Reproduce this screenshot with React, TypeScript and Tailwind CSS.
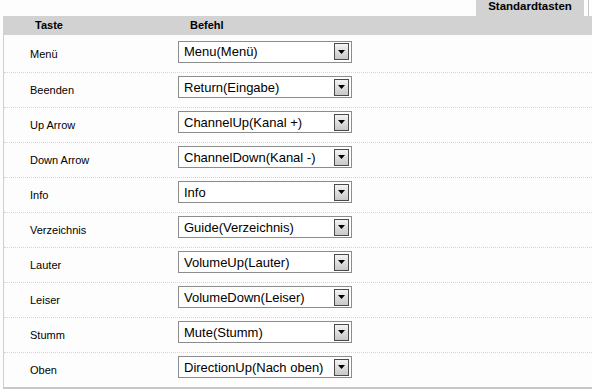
const rows = [
  { key: "Menü", cmd: "Menu(Menü)" },
  { key: "Beenden", cmd: "Return(Eingabe)" },
  { key: "Up Arrow", cmd: "ChannelUp(Kanal +)" },
  { key: "Down Arrow", cmd: "ChannelDown(Kanal -)" },
  { key: "Info", cmd: "Info" },
  { key: "Verzeichnis", cmd: "Guide(Verzeichnis)" },
  { key: "Lauter", cmd: "VolumeUp(Lauter)" },
  { key: "Leiser", cmd: "VolumeDown(Leiser)" },
  { key: "Stumm", cmd: "Mute(Stumm)" },
  { key: "Oben", cmd: "DirectionUp(Nach oben)" },
];

function FakeSelect({ value }: { value: string }) {
  return (
    <div className="w-[174px] h-[22px] mb-[6px] border border-[#8c8c8c] bg-white flex items-center justify-between pl-[5px] pr-[2px]">
      <span className="text-[13px] text-black whitespace-nowrap leading-none">{value}</span>
      <div className="w-[15px] h-[17px] border border-[#4a4a4a] bg-gradient-to-b from-[#f4f4f4] to-[#c8c8c8] flex items-center justify-center">
        <svg width="7" height="4" viewBox="0 0 7 4">
          <path d="M0 0h7L3.5 4z" fill="#000" />
        </svg>
      </div>
    </div>
  );
}

export default function App() {
  return (
    <div className="w-[592px] h-[389px] bg-[#fdfdfd] overflow-hidden font-['Liberation_Sans',Arial,sans-serif]">
      <div className="h-4 flex justify-end items-stretch">
        <div className="w-[108px] bg-[#d2d2d2] flex justify-center items-start">
          <span className="text-[11.5px] font-bold text-black leading-[12px]">Standardtasten</span>
        </div>
        <div className="w-1" />
        <div className="w-1 border-l border-[#c4c4c4]" />
      </div>
      <div className="ml-[3px] border-l border-[#cfcfcf] border-b-2 border-b-[#c8c8c8]">
        <div className="h-[19px] bg-[#d2d2d2] flex items-center text-[11px] font-bold text-black -ml-px">
          <span className="pl-[32px] w-[187px]">Taste</span>
          <span>Befehl</span>
        </div>
        <div className="pt-[2px]">
          {rows.map((r, i) => (
            <div
              key={r.key}
              className={
                i === 0
                  ? "h-[35px] flex items-center"
                  : "h-[35px] flex items-center border-t border-dotted border-[#d6d6d6]"
              }
            >
              <span className="w-[174px] pl-[26px] text-[11px] text-black">{r.key}</span>
              <FakeSelect value={r.cmd} />
            </div>
          ))}
        </div>
      </div>
    </div>
  );
}
